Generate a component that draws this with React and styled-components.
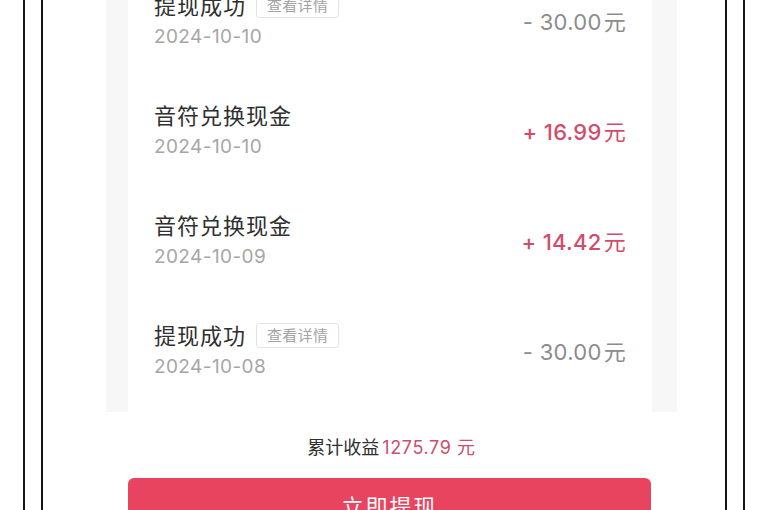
import React from 'react'
import styled, { createGlobalStyle } from 'styled-components'

const GlobalStyle = createGlobalStyle`
  html, body {
    margin: 0;
    padding: 0;
    background: #fff;
  }
  body {
    font-family: Inter, "Noto Sans CJK SC", sans-serif;
    -webkit-font-smoothing: antialiased;
  }
`

const Bezel = styled.div`
  margin-left: 23px;
  width: 722px;
  height: 510px;
  box-sizing: border-box;
  border-left: 2px solid #151515;
  border-right: 2px solid #151515;
  padding: 0 16px;
  overflow: hidden;
`

const Screen = styled.div`
  height: 100%;
  box-sizing: border-box;
  border-left: 2px solid #151515;
  border-right: 2px solid #151515;
  padding: 0 48px 0 63px;
  display: flex;
  flex-direction: column;
`

const Panel = styled.div`
  flex-shrink: 0;
  background: #f7f7f7;
  padding: 0 25px 0 22px;
  overflow: hidden;
`

const Card = styled.ul`
  list-style: none;
  margin: -35px 0 0;
  padding: 0 0 7px;
  background: #fff;
`

const Row = styled.li`
  height: 110px;
  padding: 0 26px 0 26px;
  display: flex;
  align-items: center;
  justify-content: space-between;
`

const Info = styled.div`
  display: flex;
  flex-direction: column;
`

const TitleLine = styled.div`
  display: flex;
  align-items: center;
  gap: 10px;
  height: 30px;
`

const Title = styled.span`
  font-size: 22px;
  letter-spacing: 1px;
  color: #2f2f2f;
  line-height: 30px;
`

const Tag = styled.span`
  font-size: 15px;
  line-height: 23px;
  padding: 0 10px;
  color: #a3a3a3;
  border: 1px solid #e2e2e2;
  border-radius: 3px;
  letter-spacing: 0.3px;
`

const Date = styled.div`
  margin-top: 3px;
  font-size: 19px;
  line-height: 26px;
  letter-spacing: 0.4px;
  color: #a6a6a6;
`

const Amount = styled.div`
  font-size: 22px;
  letter-spacing: 0.3px;
  font-weight: ${p => (p.$income ? 500 : 400)};
  color: ${p => (p.$income ? '#d24b6b' : '#8c8c8c')};

  .unit {
    font-weight: 400;
    margin-left: 2px;
  }
`

const Summary = styled.div`
  flex-shrink: 0;
  margin-top: 24px;
  text-align: center;
  font-size: 18px;
  line-height: 24px;
  color: #2f2f2f;

  em {
    font-style: normal;
    color: #c9506e;
    font-size: 18px;
    letter-spacing: 0.6px;
    margin-left: 3px;
  }
`

const Button = styled.button`
  flex-shrink: 0;
  margin: 18px 26px 0 22px;
  height: 54px;
  border: none;
  border-radius: 6px;
  background: #e8445f;
  color: #fff;
  font-family: inherit;
  font-size: 22px;
  letter-spacing: 2px;
`

const records = [
  { title: '提现成功', date: '2024-10-10', amount: '- 30.00', detail: true },
  { title: '音符兑换现金', date: '2024-10-10', amount: '+ 16.99', income: true },
  { title: '音符兑换现金', date: '2024-10-09', amount: '+ 14.42', income: true },
  { title: '提现成功', date: '2024-10-08', amount: '- 30.00', detail: true },
]

export default function App() {
  return (
    <>
      <GlobalStyle />
      <Bezel>
        <Screen>
          <Panel>
            <Card>
              {records.map((r, i) => (
                <Row key={i}>
                  <Info>
                    <TitleLine>
                      <Title>{r.title}</Title>
                      {r.detail && <Tag>查看详情</Tag>}
                    </TitleLine>
                    <Date>{r.date}</Date>
                  </Info>
                  <Amount $income={r.income}>
                    {r.amount}
                    <span className="unit">元</span>
                  </Amount>
                </Row>
              ))}
            </Card>
          </Panel>
          <Summary>
            累计收益<em>1275.79 元</em>
          </Summary>
          <Button>立即提现</Button>
        </Screen>
      </Bezel>
    </>
  )
}
